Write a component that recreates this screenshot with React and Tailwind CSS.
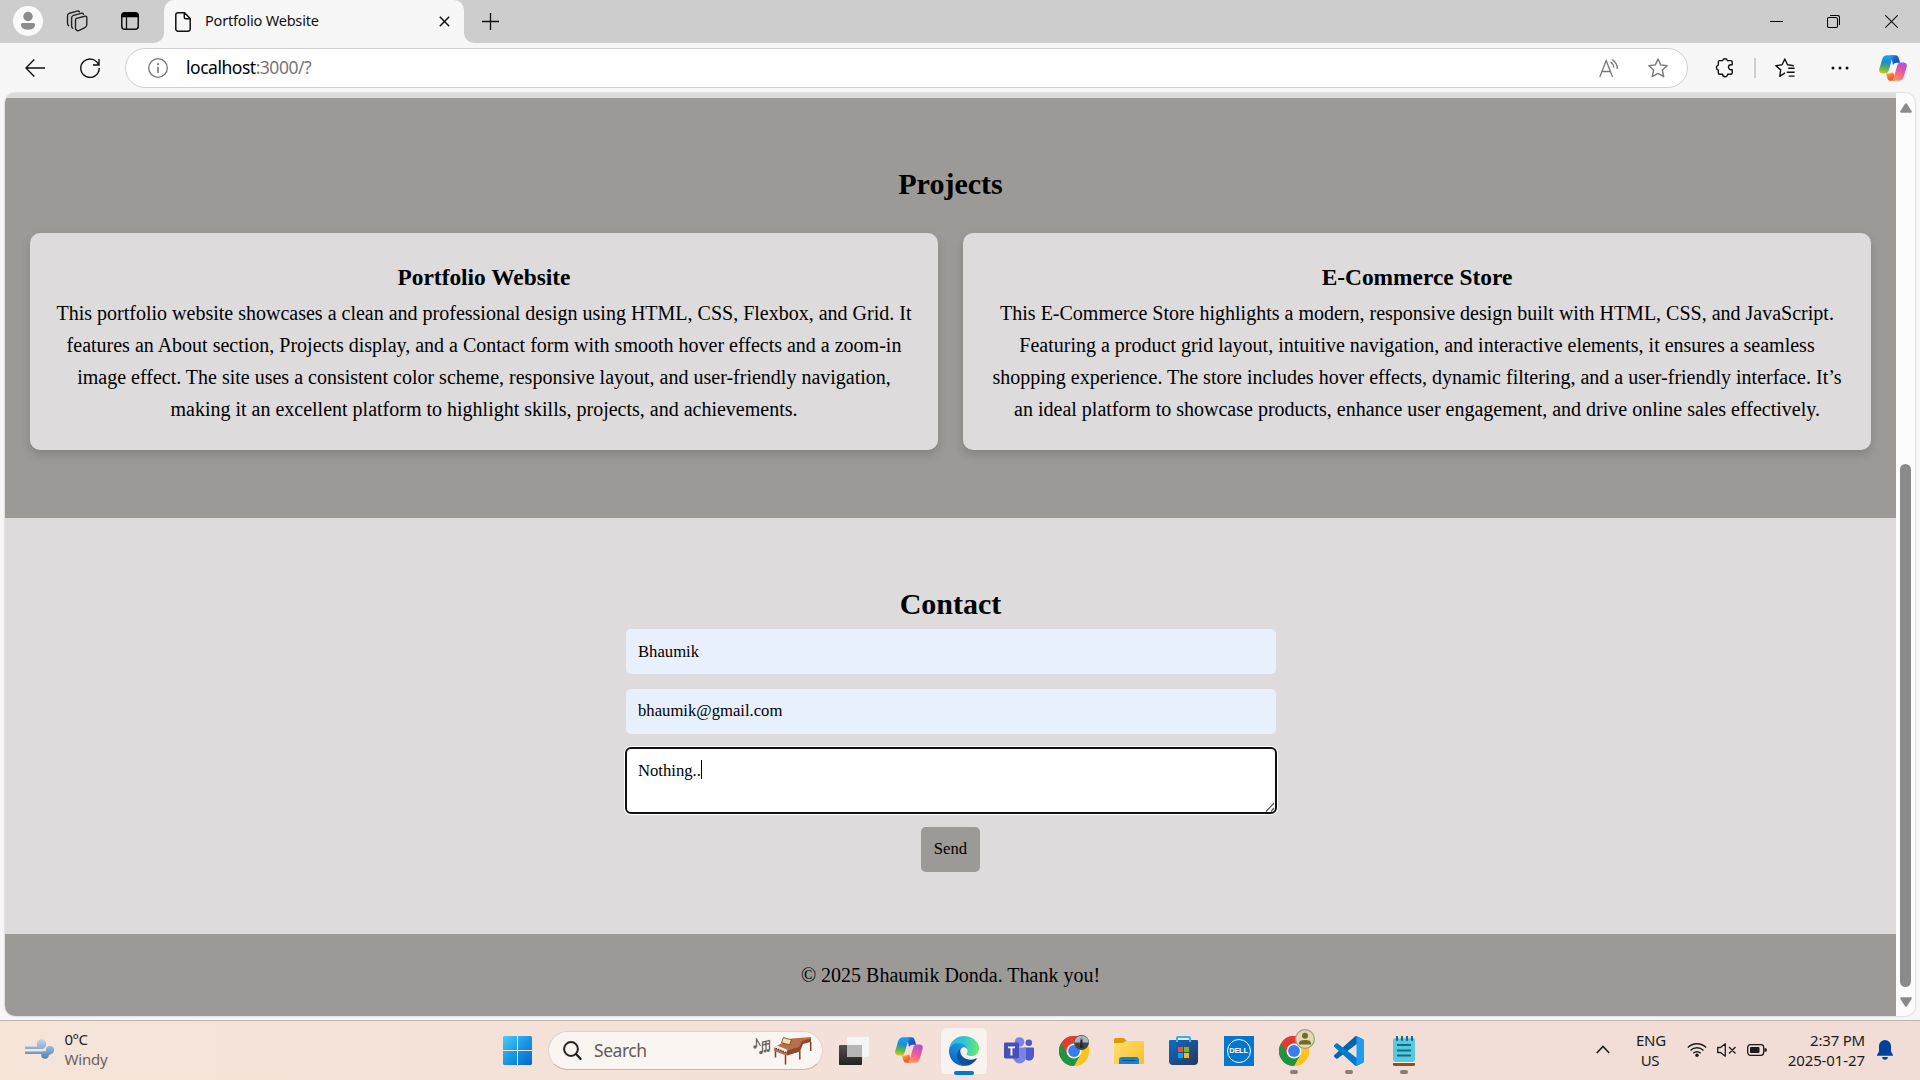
const SERIF = "font-['Liberation_Serif',serif]";

function Icon({ w, h, className = "", children, vb }) {
  return (
    <svg width={w} height={h} viewBox={vb || `0 0 ${w} ${h}`} fill="none" className={"shrink-0 " + className}>
      {children}
    </svg>
  );
}

function Copilot({ id, w = 28, h = 26 }) {
  return (
    <Icon w={w} h={h} vb="0 0 28 26">
      <defs>
        <linearGradient id={id + "a"} x1="8" y1="1" x2="5" y2="20" gradientUnits="userSpaceOnUse">
          <stop stopColor="#1b9cf0" /><stop offset=".35" stopColor="#1a8fd0" /><stop offset=".65" stopColor="#5fb548" /><stop offset="1" stopColor="#f7cb1c" />
        </linearGradient>
        <linearGradient id={id + "b"} x1="24" y1="6" x2="14" y2="26" gradientUnits="userSpaceOnUse">
          <stop stopColor="#a650e8" /><stop offset=".5" stopColor="#ee5a9a" /><stop offset="1" stopColor="#ffa24a" />
        </linearGradient>
        <linearGradient id={id + "c"} x1="13" y1="1" x2="20" y2="8" gradientUnits="userSpaceOnUse">
          <stop stopColor="#1b7be6" /><stop offset="1" stopColor="#1b3fb8" />
        </linearGradient>
        <linearGradient id={id + "d"} x1="8" y1="17" x2="13" y2="26" gradientUnits="userSpaceOnUse">
          <stop stopColor="#f9b233" /><stop offset="1" stopColor="#e8453c" />
        </linearGradient>
      </defs>
      <path d="M12 .3h4.600c1.500 0 2.400.8 2.900 2.200l1.600 5.200h-3.500c-2 0-3 .9-3.500 2.500z" fill={`url(#${id}c)`} />
      <path d="M15.800 25.700h-4.400c-1.500 0-2.500-.8-3-2.300L7 18.400h3c1.500 0 2.500-.5 3-1.500l2 2z" fill={`url(#${id}d)`} />
      <path d="M8.500.3h7.300c-1.500.4-2 1.600-2.500 3.200L9.600 15.800c-.6 1.900-1.600 2.700-3.600 2.700H3.500C1 18.500-.3 16.700.2 14.300L3 4.800C4 1.700 5.600.3 8.500.3z" fill={`url(#${id}a)`} />
      <path d="M19.400 25.700h-7.200c1.500-.4 2-1.600 2.500-3.200l3.600-12.200c.6-1.900 1.700-2.700 3.600-2.700h2.500c2.500 0 3.900 1.800 3.300 4.200l-2.800 9.400c-.9 3.100-2.600 4.500-5.500 4.500z" fill={`url(#${id}b)`} />
    </Icon>
  );
}

function ChromeLogo() {
  return (
    <Icon w={30} h={30} vb="0 0 48 48">
      <path d="M24 24 3.200 12A24 24 0 0 1 44.800 12z" fill="#e33b2e" />
      <path d="M24 24 44.800 12A24 24 0 0 1 24 48z" fill="#fcc31e" />
      <path d="M24 24 24 48A24 24 0 0 1 3.200 12z" fill="#229342" />
      <path d="M24 12h20.800A24 24 0 0 0 3.200 12l10.400 18z" fill="#e33b2e" />
      <path d="M34.400 30 24 48A24 24 0 0 0 44.800 12H24z" fill="#fcc31e" />
      <path d="M13.600 30 3.200 12A24 24 0 0 0 24 48l10.400-18z" fill="#229342" />
      <circle cx="24" cy="24" r="12" fill="#fff" />
      <circle cx="24" cy="24" r="9.500" fill="#3b7df0" />
    </Icon>
  );
}

function EdgeLogo() {
  return (
    <Icon w={30} h={30} vb="0 0 256 256">
      <defs>
        <linearGradient id="e1" x1="20" y1="180" x2="230" y2="180" gradientUnits="userSpaceOnUse"><stop stopColor="#0c59a4" /><stop offset="1" stopColor="#114a8b" /></linearGradient>
        <linearGradient id="e2" x1="150" y1="90" x2="50" y2="230" gradientUnits="userSpaceOnUse"><stop stopColor="#1b9de2" /><stop offset=".6" stopColor="#0f7fd6" /><stop offset="1" stopColor="#0a66c4" /></linearGradient>
        <linearGradient id="e3" x1="10" y1="70" x2="250" y2="110" gradientUnits="userSpaceOnUse"><stop stopColor="#2fb4e8" /><stop offset=".5" stopColor="#36c6d0" /><stop offset="1" stopColor="#66eb6e" /></linearGradient>
      </defs>
      <path d="M231 190.500c-3.400 1.800-6.900 3.400-10.500 4.700a101.900 101.900 0 0 1-35.900 6.500c-47.300 0-88.500-32.500-88.500-74.300.1-11.400 6.400-21.900 16.400-27.300-42.800 1.800-53.800 46.400-53.800 72.500 0 73.900 68.100 81.400 82.800 81.400 7.900 0 19.800-2.300 27-4.600l1.300-.4a128.300 128.300 0 0 0 66.600-52.800 4 4 0 0 0-5.400-5.700z" fill="url(#e1)" />
      <path d="M105.700 241.400a79.200 79.200 0 0 1-22.700-21.300 80.700 80.700 0 0 1 29.500-120c3.200-1.500 8.500-4.100 15.600-4 10.100.1 19.600 4.900 25.700 13 4 5.400 6.300 11.900 6.400 18.700 0-.2 24.500-79.600-80-79.600-43.900 0-80 41.700-80 78.200-.2 19.300 4 38.500 12.100 56a128 128 0 0 0 156.400 67.100 75.500 75.500 0 0 1-63-8.100z" fill="url(#e2)" />
      <path d="M152.300 148.900c-.9 1-3.400 2.500-3.400 5.600 0 2.600 1.700 5.200 4.800 7.300 14.400 10.100 41.700 8.700 41.700 8.700 10.700 0 21.300-2.900 30.500-8.400a61.900 61.900 0 0 0 30.400-53.300c.3-22.400-8-37.300-11.300-43.900C223.500 23.900 177.700 0 128 0A128 128 0 0 0 0 126.200c.5-36.500 36.800-66 80-66 3.500 0 23.500.3 42 10.100 16.300 8.600 24.900 18.900 30.800 29.200 6.200 10.700 7.300 24.100 7.300 29.500s-2.700 13.300-7.800 19.900z" fill="url(#e3)" />
    </Icon>
  );
}

const Slot = ({ children, mark }) => (
  <div className="relative flex h-full w-[55px] items-center justify-center">
    {children}
    {mark && <span className="absolute bottom-[6px] h-1 w-2 rounded-full bg-[#877c78]" />}
  </div>
);

function TabStrip() {
  return (
    <div className="flex h-[43px] bg-[#cdcdcd]">
      <div className="flex w-[154px] items-center pb-px pl-[13px]">
        <Icon w={30} h={30}>
          <circle cx="15" cy="15" r="15" fill="#fafafa" />
          <circle cx="15" cy="10.500" r="4.700" fill="#8c8c8c" />
          <path d="M9.500 17h11a1.500 1.500 0 0 1 1.500 1.500c0 3.500-3 5.200-7 5.200s-7-1.700-7-5.200A1.500 1.500 0 0 1 9.500 17z" fill="#8c8c8c" />
        </Icon>
        <Icon w={22} h={22} className="ml-[23px]">
          <g stroke="#222" strokeWidth="1.400" strokeLinejoin="round" strokeLinecap="round">
            <path d="M10.500 8.400 18.800 6.200Q20.800 5.700 20.800 7.500V14.500Q20.800 16.200 19.300 17.300L13.300 20.400Q11 21.400 10 19.700 9.500 19 9.500 18V10Q9.500 8.700 10.500 8.400z" />
            <path d="M17.500 4.200Q16.800 3 15 3.400L7.500 5.400Q5.600 6 5.600 8V16Q5.600 17.500 6.700 18.300" />
            <path d="M13.500 1.800Q12.800.7 11 1.200L3.500 3.200Q1.500 3.800 1.500 6V13Q1.500 14.800 2.700 15.700" />
          </g>
        </Icon>
        <Icon w={18} h={18} className="ml-[33px]">
          <rect x=".75" y=".75" width="16.500" height="16.500" rx="3" stroke="#111" strokeWidth="1.500" />
          <path d="M.5 5.300V3.500a3 3 0 0 1 3-3h11a3 3 0 0 1 3 3v1.800z" fill="#000" />
          <path d="M5.500 5v12" stroke="#111" strokeWidth="1.300" />
        </Icon>
      </div>
      <div className="flex w-[10px] bg-[#f7f7f7]"><div className="w-full rounded-br-[10px] bg-[#cdcdcd]" /></div>
      <div className="bg-[#cdcdcd]">
        <div className="flex h-full w-[300px] items-center rounded-t-[10px] bg-[#f7f7f7] pl-[11px]">
          <Icon w={16} h={20}>
            <path d="M3 .8h6.500l5.700 5.700V17a2.200 2.200 0 0 1-2.200 2.200H3A2.200 2.200 0 0 1 .8 17V3A2.200 2.200 0 0 1 3 .8zM9.300 1v4.200q0 1.500 1.500 1.500h4.200" stroke="#111" strokeWidth="1.500" />
          </Icon>
          <span className="ml-[14px] w-[234px] whitespace-nowrap pb-px font-['Noto_Sans',sans-serif] text-[14.500px] tracking-[-0.19px] text-[#111]">Portfolio Website</span>
          <Icon w={11} h={11}><path d="m.8.800 9.400 9.400m0-9.400L.8 10.200" stroke="#111" strokeWidth="1.500" /></Icon>
        </div>
      </div>
      <div className="flex w-[10px] bg-[#f7f7f7]"><div className="w-full rounded-bl-[10px] bg-[#cdcdcd]" /></div>
      <div className="flex flex-1 items-center pb-px pl-2">
        <Icon w={17} h={17}><path d="M8.500 0v17M0 8.500h17" stroke="#111" strokeWidth="1.300" /></Icon>
        <div className="ml-auto flex items-center pr-[22px]">
          <Icon w={13} h={13}><path d="M0 6.500h13" stroke="#000" /></Icon>
          <Icon w={13} h={13} className="ml-11"><path d="M2.500 2.500h6.500a2 2 0 0 1 1.500 1.500v7a1.500 1.500 0 0 1-1.500 1.500H2A1.500 1.500 0 0 1 .5 11V4A1.500 1.500 0 0 1 2 2.500zM3 .5h7.500a2 2 0 0 1 2 2V10" stroke="#000" strokeWidth="1.100" /></Icon>
          <Icon w={13} h={13} className="ml-[45px]"><path d="m.3.300 12.400 12.400m0-12.400L.3 12.700" stroke="#111" strokeWidth="1.100" /></Icon>
        </div>
      </div>
    </div>
  );
}

function Toolbar() {
  return (
    <div className="flex h-[50px] items-center bg-[#f7f7f7] pl-[25px]">
      <Icon w={20} h={18} className="mb-px"><path d="M9.300.5.9 9l8.400 8.500M1 9h19" stroke="#111" strokeWidth="1.400" /></Icon>
      <Icon w={20} h={20} className="ml-[35px]"><path d="M18.800 7.500A9.200 9.200 0 1 0 19.200 10M19 1v6h-6" stroke="#111" strokeWidth="1.400" /></Icon>
      <div className="ml-[25px] flex h-10 w-[1563px] items-center rounded-full border border-[#cfcfcf] bg-white pl-[22px]">
        <Icon w={20} h={20}>
          <circle cx="10" cy="10" r="9.300" stroke="#757575" strokeWidth="1.300" />
          <path d="M10 8.800v6.200" stroke="#757575" strokeWidth="1.600" /><circle cx="10" cy="6.200" r="1.100" fill="#757575" />
        </Icon>
        <span className="ml-[18px] flex-1 whitespace-nowrap pb-[2px] font-['Noto_Sans',sans-serif] text-[17.500px] tracking-[-0.48px] text-[#777]"><span className="text-black">localhost</span>:3000/?</span>
        <Icon w={20} h={19}>
          <path d="m.8 18 6.400-16.500L13.500 18M3 12.500h8.400" stroke="#777" strokeWidth="1.300" />
          <path d="M11.500 2.800a8 8 0 0 1 3.200 6M13.300.6a12 12 0 0 1 5.200 9.400" stroke="#777" strokeWidth="1.300" />
        </Icon>
        <Star className="ml-[29px] mr-[19px]" color="#777" />
      </div>
      <Icon w={20} h={21} className="mb-px ml-[27px]">
        <path d="M3.400 4.600a1 1 0 0 1 1-1h3.200a2.500 2.500 0 0 1 4.800 0h3.300a1.500 1.500 0 0 1 1.500 1.500v2.700h-1.200a2.500 2.500 0 0 0 0 5h1.200v3a1.500 1.500 0 0 1-1.500 1.500h-3.100a2.500 2.500 0 0 1-5 0H4.800a1.500 1.500 0 0 1-1.500-1.500v-2.700a2.600 2.600 0 0 1 0-5z" stroke="#111" strokeWidth="1.400" strokeLinejoin="round" />
      </Icon>
      <span className="ml-[19px] h-5 w-[2px] bg-[#cfcfcf]" />
      <Icon w={21} h={20} className="ml-[19px]">
        <path d="m10.200 15.200-5.300 3.500.9-6.600L.9 7.900l6.300-1L10 1l2.800 5.900 6.400 1M13.500 10.400H20M12 14.500h8M14 18.500h6" transform="scale(.98)" stroke="#111" strokeWidth="1.400" strokeLinejoin="round" />
      </Icon>
      <Icon w={18} h={4} className="ml-[35px]"><g fill="#111"><circle cx="2" cy="2" r="1.500" /><circle cx="9" cy="2" r="1.500" /><circle cx="16" cy="2" r="1.500" /></g></Icon>
      <div className="ml-[30px]"><Copilot id="tb" /></div>
    </div>
  );
}

function Star({ color, className }) {
  return (
    <Icon w={20} h={20} className={className}>
      <path d="m10 1 2.700 5.900 6.400.8-4.700 4.400 1.300 6.500L10 15.400l-5.700 3.200 1.300-6.500L.9 7.700l6.400-.8z" stroke={color} strokeWidth="1.400" strokeLinejoin="round" />
    </Icon>
  );
}

const projects = [
  ["Portfolio Website", ["This portfolio website showcases a clean and professional design using HTML, CSS, Flexbox, and Grid. It", "features an About section, Projects display, and a Contact form with smooth hover effects and a zoom-in", "image effect. The site uses a consistent color scheme, responsive layout, and user-friendly navigation,", "making it an excellent platform to highlight skills, projects, and achievements."]],
  ["E-Commerce Store", ["This E-Commerce Store highlights a modern, responsive design built with HTML, CSS, and JavaScript.", "Featuring a product grid layout, intuitive navigation, and interactive elements, it ensures a seamless", "shopping experience. The store includes hover effects, dynamic filtering, and a user-friendly interface. It’s", "an ideal platform to showcase products, enhance user engagement, and drive online sales effectively."]],
];

function Page() {
  return (
    <div className={"flex-1 text-black " + SERIF}>
      <div className="h-[5px] bg-[#dddbdb]" />
      <section className="h-[420px] bg-[#9c9a97] px-[25px] pt-[62px]">
        <h2 className="text-center text-[30px] font-bold leading-[48px]">Projects</h2>
        <div className="mt-[25px] grid grid-cols-2 gap-[25px]">
          {projects.map(([title, lines]) => (
            <article key={title} className="h-[217px] rounded-[10px] bg-[#dddbdc] pt-[25px] text-center shadow-[0_5px_10px_rgba(0,0,0,0.15)]">
              <h3 className="text-[23.400px] font-bold leading-[39px]">{title}</h3>
              {lines.map((l) => <p key={l} className="whitespace-nowrap text-[20px] leading-8">{l}</p>)}
            </article>
          ))}
        </div>
      </section>
      <section className="flex h-[416px] flex-col items-center bg-[#dddbdc] pt-[62px]">
        <h2 className="text-[30px] font-bold leading-[48px]">Contact</h2>
        <div className="mt-px flex h-[45px] w-[650px] items-center rounded-[5px] bg-[#e8f0fe] pl-[12.500px] text-[16.670px]">Bhaumik</div>
        <div className="mt-[15px] flex h-[45px] w-[650px] items-center rounded-[5px] bg-[#e8f0fe] pb-[2px] pl-[12.500px] text-[16.670px]">bhaumik@gmail.com</div>
        <div className="mt-[13px] flex h-[67px] w-[652px] rounded-[6px] border-2 border-[#101010] bg-white pl-[11.500px] pt-[11px] text-[16.670px] leading-[22px] ring-1 ring-white">
          <span className="h-5">Nothing..</span><span className="h-[19px] w-px bg-black" />
          <Icon w={10} h={10} className="ml-auto self-end"><path d="M1 9.500 9 1M6 9.500 9 6" stroke="#555" strokeWidth="1.200" /></Icon>
        </div>
        <div className="mt-[13px] flex h-[45px] w-[59px] items-center justify-center rounded-[5px] bg-[#9c9a97] pb-[2px] text-[16.670px]">Send</div>
      </section>
      <footer className="h-[82px] bg-[#9c9a97] pt-[25px] text-center text-[20px] leading-8">© 2025 Bhaumik Donda. Thank you!</footer>
    </div>
  );
}

function Scrollbar() {
  return (
    <div className="flex w-[19px] flex-col items-center bg-[#fcfcfc]">
      <Icon w={12} h={10} className="mt-[10px]"><path d="M5 .8q1-1.200 2 0l4.700 7.500q.5 1.400-1 1.400H1.300q-1.500 0-1-1.400z" fill="#8b8b8b" /></Icon>
      <div className="mt-[351px] h-[523px] w-[11px] rounded-full bg-[#8b8b8b]" />
      <Icon w={12} h={10} className="mt-[10px]"><path d="M5 9.200q1 1.200 2 0l4.700-7.500q.5-1.400-1-1.400H1.300q-1.500 0-1 1.400z" fill="#8b8b8b" /></Icon>
    </div>
  );
}

function Piano() {
  return (
    <Icon w={39} h={30}>
      <path d="M2.500 15v6.500M12.500 19v9.500M26.800 15v8.500M37.700 6v9" stroke="#7b4029" strokeWidth="1.500" />
      <path d="M1 11.500 9 7l10-4.500L38 1v4.500l-9 2-2.500 8L13 19.500 1 15z" fill="#b96f49" />
      <path d="M14 14.500 26 11l3-6 9-2.500v3.200l-8 2.300-3 7.500-13 4z" fill="#8a4930" />
      <path d="m1 12 3-2.500 10.500 4.300-1.500 3z" fill="#f3e9df" />
      <path d="m2.500 12.300 10.500 4.200" stroke="#333" strokeWidth="1.300" strokeDasharray="1.500 1" />
      <path d="m8.500 6.500 2-5 4 1.300 4 .8-2 5.200-4-1z" fill="#f5dfa8" stroke="#70401f" strokeWidth=".8" />
    </Icon>
  );
}

function Taskbar() {
  const ui = "font-['Noto_Sans',sans-serif]";
  return (
    <div className={"flex h-[60px] border-t border-[#bfb1ab] bg-linear-to-r from-[#f5e4d8] via-[#f3e0d8] to-[#f1dcd6] " + ui}>
      <div className="flex w-[488px] items-center pl-[25px]">
        <Icon w={29} h={20} className="mt-[-3px]">
          <defs><linearGradient id="wind" x1="0" y1="0" x2="0" y2="20" gradientUnits="userSpaceOnUse"><stop stopColor="#c1d4ef" /><stop offset=".45" stopColor="#8eb0d8" /><stop offset="1" stopColor="#4f80aa" /></linearGradient></defs>
          <g fill="url(#wind)"><path d="M0 7.500h13V10H0zM0 12.500h19V15H0z" /><circle cx="16.500" cy="5" r="4.700" /><path d="M12 7h9l-3 3h-6z" /><circle cx="25" cy="11" r="4" /><circle cx="20" cy="16" r="3.800" /><path d="M18 12.500h8v2.500l-4 2z" /></g>
        </Icon>
        <div className="ml-[10.500px] mt-[-3px] text-[15px] leading-5"><div className="tracking-[-0.5px] text-[#222]">0°C</div><div className="tracking-[-0.2px] text-[#6b625e]">Windy</div></div>
      </div>
      <div className="flex w-[60px] items-center pl-[15px]">
        <Icon w={29} h={29}>
          <defs><linearGradient id="win" x1="0" y1="0" x2="29" y2="29" gradientUnits="userSpaceOnUse"><stop stopColor="#49ccfb" /><stop offset=".5" stopColor="#1b96e4" /><stop offset="1" stopColor="#0067cc" /></linearGradient></defs>
          <path d="M1 0h13v14H0V1zM15 0h13l1 1v13H15zM0 15h14v14H1l-1-1zM15 15h14v13l-1 1H15z" fill="url(#win)" />
        </Icon>
      </div>
      <div className="flex h-[39px] w-[275px] items-center self-center rounded-full border border-[#e4d0c8] border-b-[#c9b3ab] bg-[#fbf5f2] pl-[14px]">
        <Icon w={19} h={19}><circle cx="8" cy="8" r="6.900" stroke="#222" strokeWidth="2" /><path d="m13 13 4.500 4.800" stroke="#222" strokeWidth="2.400" strokeLinecap="round" /></Icon>
        <span className="ml-3 w-[159px] text-[17.500px] tracking-[-0.45px] text-[#625b58]">Search</span>
        <Icon w={18} h={18} className="mb-2">
          <g stroke="#6c6666" strokeWidth="1.300"><path d="M3.500 9V1l4 7M9.500 14V4l7-1.500V12M9.500 7l7-1.500M13 13V4" /></g>
          <g fill="#6c6666"><circle cx="2" cy="9" r="1.800" /><circle cx="8" cy="14.500" r="1.800" /><circle cx="12" cy="13" r="1.500" /><circle cx="15.200" cy="12.500" r="1.600" /></g>
        </Icon>
        <div className="ml-[2px]"><Piano /></div>
      </div>
      <div className="ml-[3px] flex">
        <Slot>
          <Icon w={30} h={28}>
            <defs><linearGradient id="tv" x1="0" y1="8" x2="0" y2="28" gradientUnits="userSpaceOnUse"><stop stopColor="#505050" /><stop offset="1" stopColor="#222" /></linearGradient></defs>
            <rect y="8" width="23" height="20" rx="1" fill="url(#tv)" /><rect x="8" y="0" width="22" height="20" rx="1" fill="#f5f5f5" /><path d="M8 8h15v12H9q-1 0-1-1z" fill="#b5b5b5" />
          </Icon>
        </Slot>
        <Slot><div className="mb-[2px]"><Copilot id="tk" /></div></Slot>
        <Slot>
          <div className="relative flex size-12 items-center justify-center rounded-md border border-[#eedfd9] bg-[#faf2ee]">
            <EdgeLogo /><span className="absolute -bottom-px h-1 w-5 rounded-full bg-[#0078d4]" />
          </div>
        </Slot>
        <Slot>
          <Icon w={30} h={27}>
            <circle cx="15.500" cy="5" r="4.800" fill="#7b83eb" /><circle cx="24.800" cy="5.800" r="3.300" fill="#5059c9" />
            <path d="M20 10.500h9q1 0 1 1v6c0 4-2 6-5 6s-5-2-5-6z" fill="#5059c9" /><path d="M9 10.500h13v9c0 4-3 7-6.500 7S9 23 9 19.500z" fill="#7b83eb" />
            <rect y="5.500" width="15" height="16" rx="1.400" fill="#474fb8" /><path d="M4 9.500h7v1.800H8.400v7.200H6.500v-7.200H4z" fill="#fff" />
          </Icon>
        </Slot>
        <Slot>
          <ChromeLogo />
          <Icon w={15} h={15} className="absolute left-[28px] top-[14px]"><circle cx="7.500" cy="7.500" r="7.500" fill="#42463b" /><path d="M1 4.500a7.500 7.500 0 0 1 13 0l.8 3H.2z" fill="#a7b6c5" /><path d="M6.500 4h2v5l1 4H6z" fill="#1d2740" /><circle cx="7.500" cy="3.500" r="1.200" fill="#b98670" /></Icon>
        </Slot>
        <Slot>
          <Icon w={30} h={26}>
            <defs><linearGradient id="fo" x1="0" y1="3" x2="30" y2="26" gradientUnits="userSpaceOnUse"><stop stopColor="#ffdf72" /><stop offset="1" stopColor="#f8bf27" /></linearGradient></defs>
            <path d="M0 1.500Q0 0 1.500 0H9q1.500 0 2.500 1.500L13 3.500V6H0z" fill="#d89b0c" /><path d="M0 6q0-1 1-1h8l3-2h17q1 0 1 1v21q0 1-1 1H1q-1 0-1-1z" fill="url(#fo)" />
            <path d="M5 26v-4q0-3 3-3h14q3 0 3 3v4z" fill="#1681d0" /><path d="M9 22.500h12" stroke="#0d4d91" strokeWidth="1.200" strokeLinecap="round" />
          </Icon>
        </Slot>
        <Slot>
          <Icon w={29} h={29}>
            <defs><linearGradient id="st" x1="4" y1="4" x2="25" y2="29" gradientUnits="userSpaceOnUse"><stop stopColor="#0e6abf" /><stop offset="1" stopColor="#263a63" /></linearGradient></defs>
            <path d="M8 6V2q0-1 1-1h11q1 0 1 1v4" stroke="#23b7ee" strokeWidth="2" /><path d="M0 5q0-1 1-1h27q1 0 1 1v20q0 4-4 4H4q-4 0-4-4z" fill="url(#st)" />
            <path d="M8 6V4m13 2V4" stroke="#36c3f2" strokeWidth="2" />
            <path d="M9 11h5v5H9z" fill="#f25022" /><path d="M15 11h5v5h-5z" fill="#7fba00" /><path d="M9 17h5v5H9z" fill="#00a4ef" /><path d="M15 17h5v5h-5z" fill="#ffb900" />
          </Icon>
        </Slot>
        <Slot>
          <div className="flex size-[30px] items-center justify-center bg-[#0476d0]">
            <div className="flex size-6 items-center justify-center rounded-full border-[1.500px] border-white font-['Liberation_Sans',sans-serif] text-[7.500px] font-bold leading-none tracking-[-0.3px] text-white">DELL</div>
          </div>
        </Slot>
        <Slot mark>
          <ChromeLogo />
          <Icon w={20} h={20} className="absolute left-[29px] top-[8px]"><circle cx="10" cy="10" r="9.400" fill="#ddd8b5" stroke="#a29c84" strokeWidth="1.200" /><circle cx="10" cy="6.800" r="3" fill="#75692a" /><path d="M4 15.500v-1.500q0-3 6-3t6 3v1.500z" fill="#75692a" /></Icon>
        </Slot>
        <Slot mark>
          <Icon w={30} h={30} vb="0 0 100 100">
            <path d="M96.500 10.800 75.900.9a6.200 6.200 0 0 0-7.100 1.200L1.300 63.600a4.200 4.200 0 0 0 0 6.200l5.500 5a4.200 4.200 0 0 0 5.300.2L93.400 13.400A4.100 4.100 0 0 1 100 16.700v-.3a6.300 6.300 0 0 0-3.500-5.600z" fill="#0065a9" />
            <path d="m96.500 89.200-20.600 9.900a6.200 6.200 0 0 1-7.100-1.200L1.300 36.400a4.200 4.200 0 0 1 0-6.200l5.500-5a4.200 4.200 0 0 1 5.300-.2l81.300 61.600a4.100 4.100 0 0 0 6.600-3.300v.3a6.300 6.300 0 0 1-3.500 5.600z" fill="#007acc" />
            <path d="M75.900 99.100a6.200 6.200 0 0 1-7.100-1.200A3.700 3.700 0 0 0 75 95.300V4.700a3.700 3.700 0 0 0-6.200-2.600A6.200 6.200 0 0 1 75.900.9l20.600 9.900a6.200 6.200 0 0 1 3.500 5.600v67.200a6.200 6.200 0 0 1-3.500 5.600z" fill="#1f9cf0" />
          </Icon>
        </Slot>
        <Slot mark>
          <Icon w={22} h={30}>
            <path d="M0 27h22v1.500q0 1.500-1.500 1.500h-19Q0 30 0 28.500z" fill="#9b4a16" /><path d="M0 24h22v3H0z" fill="#f7f4ee" /><path d="M0 4q0-1.500 1.500-1.500h19Q22 2.500 22 4v20q0 2-2 2H2q-2 0-2-2z" fill="#5bc8dc" />
            <path d="M4 9h14M4 14.500h14M4 19.500h14" stroke="#08708e" strokeWidth="1.800" /><path d="M4 1v3M9 1v3M14 1v3M19 1v3" stroke="#08708e" strokeWidth="2.200" strokeLinecap="round" />
          </Icon>
        </Slot>
      </div>
      <div className="ml-auto flex items-center pb-[2px] pr-[27px] text-[#1c1c1c]">
        <Icon w={14} h={9} className="mr-[26px]"><path d="m.8 8 6.200-6.500L13.200 8" stroke="#1c1c1c" strokeWidth="1.600" /></Icon>
        <div className="w-7 text-center text-[15px] leading-5 tracking-[-0.3px]">ENG<br />US</div>
        <Icon w={20} h={15} className="ml-[23px]">
          <path d="M.8 5.500a13 13 0 0 1 18.400 0M3.500 8.500a9.200 9.200 0 0 1 13 0M6.300 11.300a5.200 5.200 0 0 1 7.400 0" stroke="#1c1c1c" strokeWidth="1.400" /><circle cx="10" cy="13.200" r="1.700" fill="#1c1c1c" />
        </Icon>
        <Icon w={20} h={14} className="ml-[10px]"><path d="M.7 4.500h2.800L8.300.8v12.400L3.500 9.500H.7zM12 4l6.500 6.500m0-6.500L12 10.500" stroke="#1c1c1c" strokeWidth="1.300" strokeLinejoin="round" /></Icon>
        <Icon w={20} h={12} className="ml-[10px]"><rect x=".7" y=".7" width="16" height="10.600" rx="2.800" stroke="#1c1c1c" strokeWidth="1.300" /><rect x="3" y="3" width="9.500" height="6" rx="1" fill="#1c1c1c" /><path d="M17.500 4q2.500 0 2.500 2t-2.500 2z" fill="#1c1c1c" /></Icon>
        <div className="ml-5 w-[78px] whitespace-nowrap text-right text-[15px] leading-5"><div className="tracking-[-0.2px]">2:37 PM</div><div className="tracking-[-0.1px]">2025-01-27</div></div>
        <Icon w={16} h={20} className="ml-3"><path d="M8 0a6 6 0 0 1 6 6v5.500l2 3.500v.8H0V15l2-3.500V6a6 6 0 0 1 6-6zM5.200 17h5.600a2.800 2.800 0 0 1-5.600 0z" fill="#00429a" /></Icon>
      </div>
    </div>
  );
}

export default function App() {
  return (
    <div className="flex h-[1080px] w-[1920px] flex-col overflow-hidden bg-[#f7f7f7]">
      <TabStrip />
      <Toolbar />
      <main className="mx-[5px] mb-1 flex h-[923px] shrink-0 overflow-hidden rounded-[10px] shadow-[0_0_2px_rgba(0,0,0,0.3)]">
        <Page />
        <Scrollbar />
      </main>
      <Taskbar />
    </div>
  );
}
